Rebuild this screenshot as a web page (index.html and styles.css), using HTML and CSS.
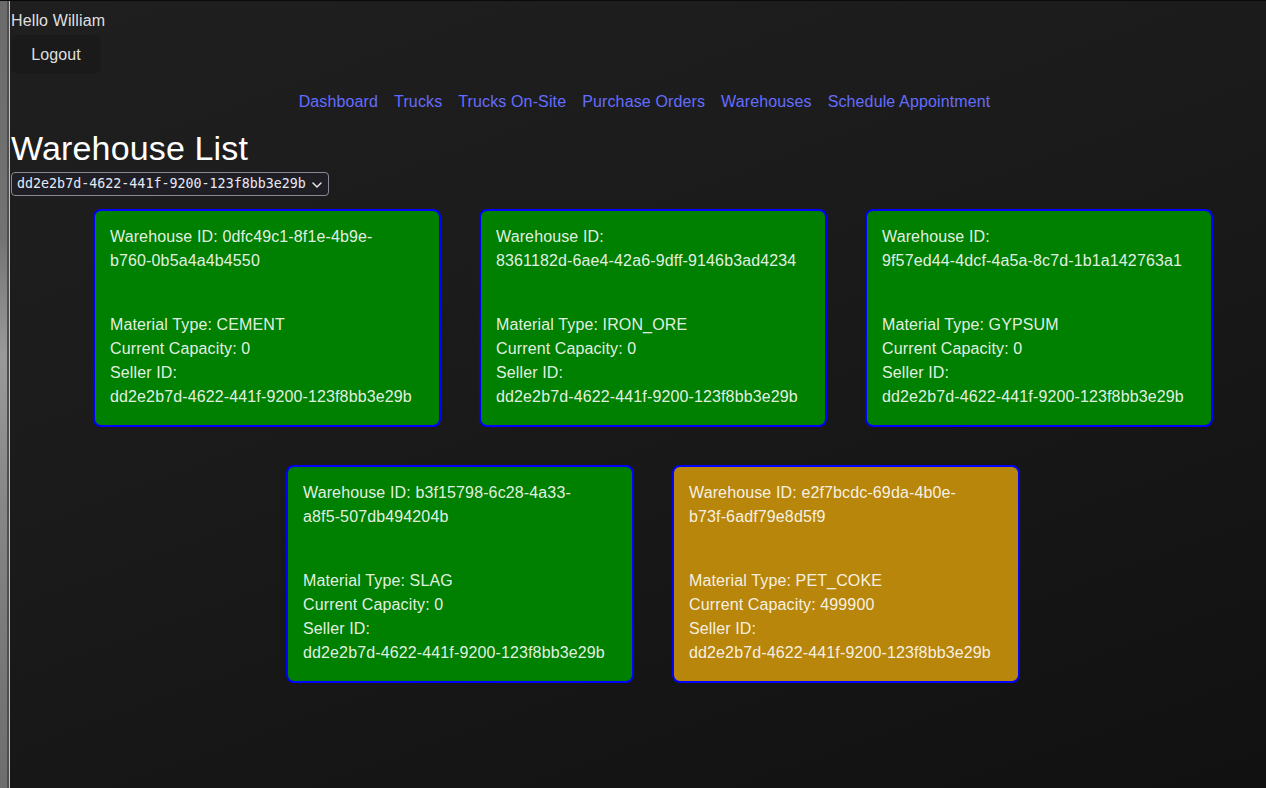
FILE: index.html
```html
<!DOCTYPE html>
<html lang="en">
<head>
<meta charset="utf-8">
<title>Warehouse List</title>
<link rel="stylesheet" href="styles.css">
</head>
<body>
<div class="frame">
  <aside class="edge"></aside>
  <main class="page">
    <div class="greeting">Hello William</div>
    <button class="logout" type="button">Logout</button>
    <nav class="nav">
      <a href="#">Dashboard</a>
      <a href="#">Trucks</a>
      <a href="#">Trucks On-Site</a>
      <a href="#">Purchase Orders</a>
      <a href="#">Warehouses</a>
      <a href="#">Schedule Appointment</a>
    </nav>
    <h1 class="title">Warehouse List</h1>
    <label class="picker">
      <select class="picker-select">
        <option>dd2e2b7d-4622-441f-9200-123f8bb3e29b</option>
      </select>
      <svg class="picker-chevron" width="10" height="6" viewBox="0 0 10 6" aria-hidden="true"><path d="M1 1 L5 5 L9 1" fill="none" stroke="#e4e4e4" stroke-width="1.5" stroke-linecap="round" stroke-linejoin="round"/></svg>
    </label>
    <div class="cards">
      <div class="card green">
        <p class="card-id">Warehouse ID: <span class="nb">0dfc49c1-8f1e-4b9e-</span><wbr><span class="nb">b760-0b5a4a4b4550</span></p>
        <div class="card-details">
          <div>Material Type: CEMENT</div>
          <div>Current Capacity: 0</div>
          <div>Seller ID: <span class="nb">dd2e2b7d-4622-441f-9200-123f8bb3e29b</span></div>
        </div>
      </div>
      <div class="card green">
        <p class="card-id">Warehouse ID: <span class="nb">8361182d-6ae4-42a6-9dff-9146b3ad4234</span></p>
        <div class="card-details">
          <div>Material Type: IRON_ORE</div>
          <div>Current Capacity: 0</div>
          <div>Seller ID: <span class="nb">dd2e2b7d-4622-441f-9200-123f8bb3e29b</span></div>
        </div>
      </div>
      <div class="card green">
        <p class="card-id">Warehouse ID: <span class="nb">9f57ed44-4dcf-4a5a-8c7d-1b1a142763a1</span></p>
        <div class="card-details">
          <div>Material Type: GYPSUM</div>
          <div>Current Capacity: 0</div>
          <div>Seller ID: <span class="nb">dd2e2b7d-4622-441f-9200-123f8bb3e29b</span></div>
        </div>
      </div>
      <div class="card green">
        <p class="card-id">Warehouse ID: <span class="nb">b3f15798-6c28-4a33-</span><wbr><span class="nb">a8f5-507db494204b</span></p>
        <div class="card-details">
          <div>Material Type: SLAG</div>
          <div>Current Capacity: 0</div>
          <div>Seller ID: <span class="nb">dd2e2b7d-4622-441f-9200-123f8bb3e29b</span></div>
        </div>
      </div>
      <div class="card gold">
        <p class="card-id">Warehouse ID: <span class="nb">e2f7bcdc-69da-4b0e-</span><wbr><span class="nb">b73f-6adf79e8d5f9</span></p>
        <div class="card-details">
          <div>Material Type: PET_COKE</div>
          <div>Current Capacity: 499900</div>
          <div>Seller ID: <span class="nb">dd2e2b7d-4622-441f-9200-123f8bb3e29b</span></div>
        </div>
      </div>
    </div>
  </main>
</div>
</body>
</html>
```
FILE: styles.css
```css
html, body {
  margin: 0;
  padding: 0;
  height: 100%;
}

body {
  font-family: "Liberation Sans", Arial, sans-serif;
  font-size: 16px;
  line-height: 24px;
  letter-spacing: 0.13px;
  color: rgba(255, 255, 255, 0.87);
  background: #151515;
  overflow: hidden;
}

.frame {
  display: flex;
  min-height: 100vh;
  box-sizing: border-box;
  border-top: 1px solid #0a0a0a;
}

.edge {
  width: 7px;
  flex: none;
  background: linear-gradient(to bottom, #6b6b6b 0%, #737373 30%, #9a9a9a 45%, #8a8a8a 60%, #7a7a7a 80%, #6e6e6e 100%);
  border-right: 2px solid #4e4e4e;
}

.page {
  flex: 1;
  min-width: 0;
  border-left: 1px solid #b4c0f2;
  padding: 8px 0 40px 1px;
  background: linear-gradient(160deg, #1f1f1f 0%, #1b1b1b 40%, #151515 75%, #111111 100%);
}

.greeting {
  line-height: 24px;
}

.logout {
  display: block;
  margin-top: 2px;
  font-family: inherit;
  font-size: 16px;
  font-weight: 500;
  letter-spacing: 0.13px;
  line-height: normal;
  color: rgba(255, 255, 255, 0.87);
  background: #1a1a1a;
  border: 1px solid transparent;
  border-radius: 8px;
  padding: 9.6px 19.2px;
  cursor: pointer;
}

.nav {
  display: flex;
  justify-content: center;
  gap: 16px;
  margin-top: 16px;
  padding-left: 12px;
  line-height: 24px;
}

.nav a {
  color: #646cff;
  text-decoration: none;
}

.title {
  margin: 14px 0 4px;
  font-size: 34px;
  font-weight: 400;
  line-height: 40px;
  letter-spacing: 0.15px;
  color: #ffffff;
}

.picker {
  display: flex;
  align-items: center;
  width: 318px;
  height: 24px;
  box-sizing: border-box;
  border: 1px solid #8a8a94;
  border-radius: 4px;
  background: #1f1e25;
  letter-spacing: 0;
}

.picker-select {
  flex: 1;
  min-width: 0;
  appearance: none;
  -webkit-appearance: none;
  border: 0;
  outline: 0;
  background: transparent;
  color: #e6eaf6;
  font-family: "DejaVu Sans Mono", monospace;
  font-size: 13.33px;
  line-height: 16px;
  padding: 0 0 0 5px;
  margin: 0;
  height: 22px;
}

.picker-chevron {
  flex: none;
  margin: 1px 6px 0 4px;
}

.cards {
  display: flex;
  flex-wrap: wrap;
  justify-content: center;
  gap: 38px;
  margin-top: 13px;
  padding-left: 29px;
}

.card {
  flex: none;
  width: 348px;
  box-sizing: border-box;
  border: 2px solid #0000ff;
  border-radius: 8px;
  padding: 14px 15px 16px;
  color: rgba(255, 255, 255, 0.9);
}

.card.green {
  background: #008000;
}

.card.gold {
  background: #b8860b;
}

.card-id {
  margin: 0;
}

.nb {
  white-space: nowrap;
}

.card-details {
  margin-top: 40px;
}
```
